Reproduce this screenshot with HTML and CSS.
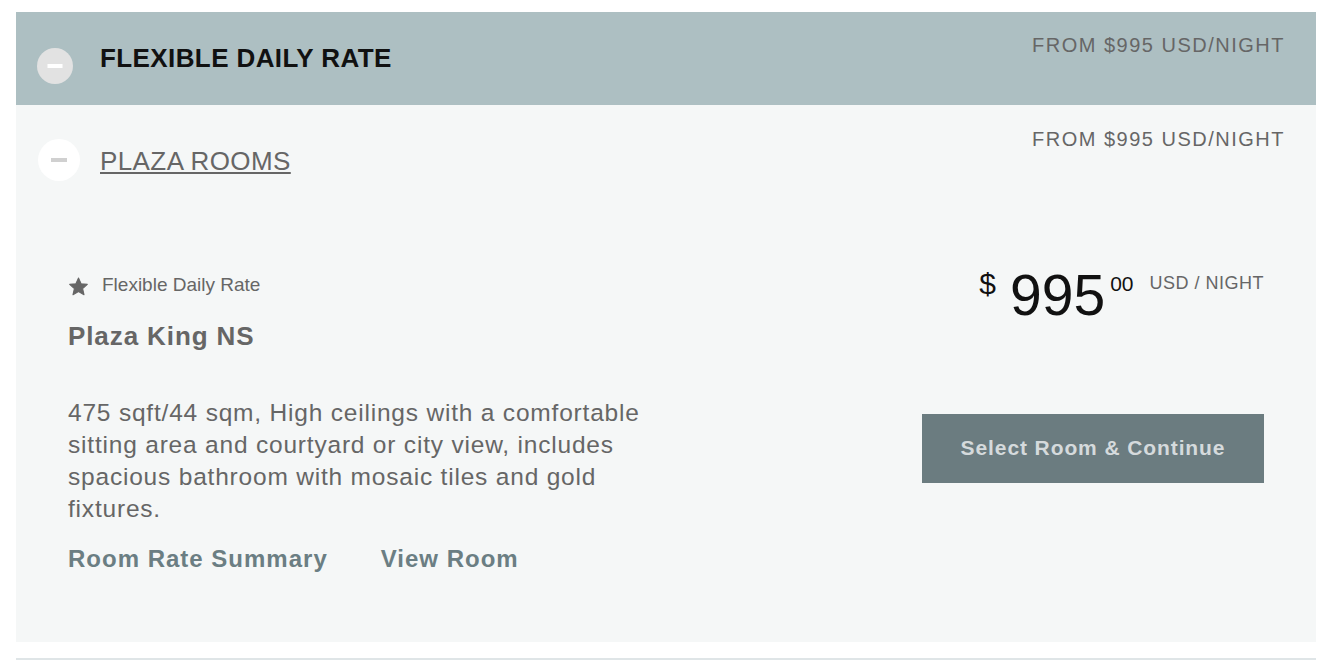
FILE: index.html
```html
<!DOCTYPE html>
<html lang="en">
<head>
    <meta charset="UTF-8">
    <meta name="viewport" content="width=device-width, initial-scale=1.0">
    <title>Plaza Rooms</title>
    <link rel="stylesheet" href="styles.css">
</head>
<body>
    <div class="rate">
        <div class="rate-head">
            <div class="rate-title">
                <span class="toggle toggle-dark"></span>
                <h2>FLEXIBLE DAILY RATE</h2>
            </div>
            <div class="from">FROM $995 USD/NIGHT</div>
        </div>

        <div class="room">
            <div class="room-head">
                <div class="room-title">
                    <span class="toggle toggle-light"></span>
                    <a href="#">PLAZA ROOMS</a>
                </div>
                <div class="from">FROM $995 USD/NIGHT</div>
            </div>

            <div class="room-card">
                <div class="room-info">
                    <div class="rate-tag">
                        <svg class="star" viewBox="0 0 24 24" width="21" height="21">
                            <path d="M12 2.2l2.95 6.6 7.15.7-5.4 4.8 1.6 7.1L12 17.7l-6.3 3.7 1.6-7.1-5.4-4.8 7.15-.7z" fill="#666" stroke="#666" stroke-width="1.2" stroke-linejoin="round"/>
                        </svg>
                        <span>Flexible Daily Rate</span>
                    </div>
                    <h3>Plaza King NS</h3>
                    <p class="desc">475 sqft/44 sqm, High ceilings with a comfortable sitting area and courtyard or city view, includes spacious bathroom with mosaic tiles and gold fixtures.</p>
                    <div class="room-links">
                        <a href="#">Room Rate Summary</a>
                        <a href="#">View Room</a>
                    </div>
                </div>

                <div class="room-price">
                    <div class="price">
                        <span class="cur">$</span>
                        <span class="amount">995</span>
                        <span class="cents">00</span>
                        <span class="unit">USD / NIGHT</span>
                    </div>
                    <button class="select-btn">Select Room &amp; Continue</button>
                </div>
            </div>
        </div>
    </div>
    <div class="divider"></div>
</body>
</html>
```

FILE: styles.css
```css
body {
    margin: 0;
    padding: 12px 16px 0;
    background-color: #fff;
    font-family: "Liberation Sans", Arial, sans-serif;
    color: #666;
}
h2, h3, p {
    margin: 0;
}

.rate-head {
    display: flex;
    justify-content: space-between;
    align-items: flex-start;
    height: 93px;
    box-sizing: border-box;
    padding: 21px 31px 0 21px;
    background-color: #adbfc2;
}
.rate-title {
    display: flex;
    align-items: flex-start;
    gap: 27px;
}
.rate-title h2 {
    margin-top: 11px;
    font-size: 26px;
    line-height: 28px;
    letter-spacing: 0.4px;
    font-weight: bold;
    color: #111;
}
.from {
    font-size: 20px;
    line-height: 24px;
    letter-spacing: 1.5px;
    color: #666;
}

/* minus toggles */
.toggle {
    position: relative;
    display: block;
    border-radius: 50%;
    flex-shrink: 0;
}
.toggle::after {
    content: "";
    position: absolute;
    left: 50%;
    top: 50%;
    height: 4px;
    transform: translate(-50%, -50%);
}
.toggle-dark {
    width: 36px;
    height: 36px;
    margin-top: 15px;
    background-color: #e2e2e2;
}
.toggle-dark::after {
    width: 15px;
    background-color: #fff;
}
.toggle-light {
    width: 42px;
    height: 42px;
    margin-top: 12px;
    background-color: #fff;
}
.toggle-light::after {
    width: 16px;
    background-color: #d0d0d0;
}

.room {
    background-color: #f5f7f7;
}
.room-head {
    display: flex;
    justify-content: space-between;
    align-items: flex-start;
    padding: 22px 31px 0 22px;
}
.room-title {
    display: flex;
    align-items: flex-start;
    gap: 20px;
}
.room-title a {
    margin-top: 19px;
    font-size: 26px;
    line-height: 30px;
    letter-spacing: 0.4px;
    color: #666;
}

.room-card {
    display: flex;
    justify-content: space-between;
    padding: 88px 52px 69px;
}
.room-info {
    padding-top: 5px;
}
.rate-tag {
    display: flex;
    align-items: center;
    gap: 13px;
    height: 22px;
    font-size: 19px;
}
.star {
    margin-top: 2px;
}
.room-info h3 {
    margin-top: 25px;
    font-size: 26px;
    line-height: 30px;
    letter-spacing: 0.9px;
    font-weight: bold;
}
.desc {
    width: 590px;
    margin-top: 46px;
    font-size: 24.5px;
    line-height: 32px;
    letter-spacing: 0.8px;
}
.room-links {
    display: flex;
    gap: 53px;
    margin-top: 20px;
}
.room-links a {
    font-size: 24px;
    line-height: 28px;
    letter-spacing: 1px;
    font-weight: bold;
    color: #6b7e83;
    text-decoration: none;
}

.room-price {
    display: flex;
    flex-direction: column;
    align-items: flex-end;
}
.price {
    display: flex;
    align-items: flex-start;
    margin-top: -2px;
    line-height: 1;
    color: #111;
}
.cur {
    margin-top: 2px;
    margin-right: 14px;
    font-size: 30px;
}
.amount {
    font-size: 57px;
}
.cents {
    margin-top: 6px;
    margin-left: 5px;
    font-size: 21px;
}
.unit {
    margin-top: 7px;
    margin-left: 16px;
    font-size: 18px;
    letter-spacing: 0.5px;
    color: #666;
}
.select-btn {
    width: 342px;
    height: 69px;
    margin-top: 90px;
    padding-bottom: 3px;
    border: none;
    background-color: #6b7c80;
    color: #d5dadc;
    font-family: inherit;
    font-size: 21px;
    font-weight: bold;
    letter-spacing: 0.9px;
}

.divider {
    height: 3px;
    margin-top: 16px;
    background-color: #dfe5e7;
}
```
